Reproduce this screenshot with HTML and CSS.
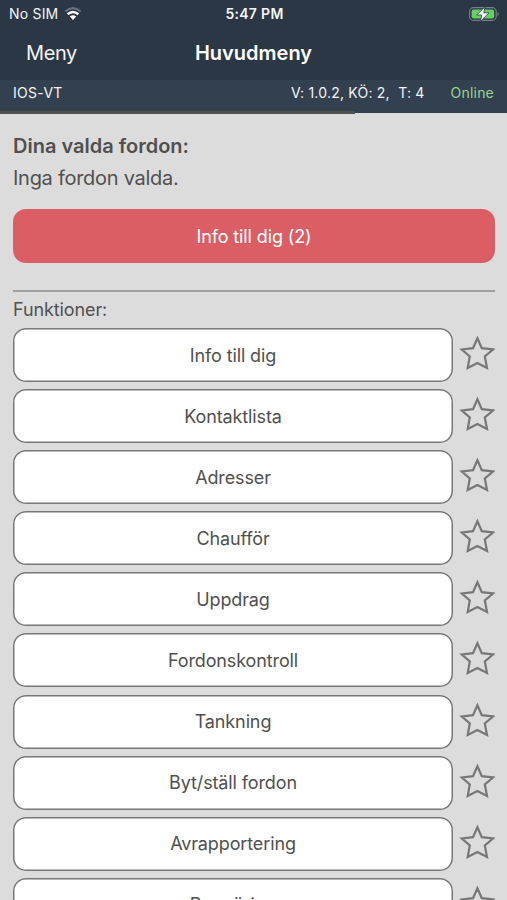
FILE: index.html
```html
<!DOCTYPE html>
<html lang="sv">
<head>
<meta charset="utf-8">
<title>Huvudmeny</title>
<link rel="stylesheet" href="styles.css">
</head>
<body>
<svg class="defs" width="0" height="0"><symbol id="star" viewBox="0 0 36 36"><path d="M18.4 3.3 22.8 13.2 34 14.5 25.8 21.5 28 33 18.4 28 8.7 33 10.8 21.5 2.8 14.5 14 13.2Z" fill="none" stroke="#777" stroke-width="2.2"/></symbol></svg>
<header class="header">
  <div class="status">
    <div class="carrier"><span>No SIM</span>
      <svg class="wifi" width="18" height="14" viewBox="0 0 18 14" fill="none"><path d="M1.3 4.5Q9-2.3 16.7 4.5" stroke="#67727e" stroke-width="2"/><path d="M3.6 7.2Q9 2.8 14.4 7.2" stroke="#fff" stroke-width="2.4"/><path d="M5.8 9.6Q9 6.9 12.2 9.6L9 13Z" fill="#fff"/></svg>
    </div>
    <div class="time">5:47 PM</div>
    <svg class="battery" width="31" height="16" viewBox="0 0 31 16"><rect x=".6" y="1.6" width="26.6" height="12.8" rx="4" fill="none" stroke="#77838b" stroke-width="1.1"/><rect x="2.6" y="3.6" width="22.6" height="8.8" rx="2.2" fill="#65d05f"/><path d="M28.5 5.8Q31 8 28.5 10.2Z" fill="#77838b"/><path d="M16 .8 7.8 9H12.7L11.4 15.4 20 6.8H14.8Z" fill="#fff" stroke="#2c3745" stroke-width=".8"/></svg>
  </div>
  <nav class="nav"><span class="back">Meny</span><h1>Huvudmeny</h1><span></span></nav>
  <div class="info"><span class="unit">IOS-VT</span><span class="version">V: 1.0.2, KÖ: 2,&nbsp; T: 4</span><span class="online">Online</span></div>
  <div class="progress"></div>
</header>
<main class="main">
  <h2>Dina valda fordon:</h2>
  <p class="none">Inga fordon valda.</p>
  <button class="alert">Info till dig (2)</button>
  <hr>
  <p class="label">Funktioner:</p>
  <div class="list">
    <div class="row"><button>Info till dig</button><svg><use href="#star"/></svg></div>
    <div class="row"><button>Kontaktlista</button><svg><use href="#star"/></svg></div>
    <div class="row"><button>Adresser</button><svg><use href="#star"/></svg></div>
    <div class="row"><button>Chaufför</button><svg><use href="#star"/></svg></div>
    <div class="row"><button>Uppdrag</button><svg><use href="#star"/></svg></div>
    <div class="row"><button>Fordonskontroll</button><svg><use href="#star"/></svg></div>
    <div class="row"><button>Tankning</button><svg><use href="#star"/></svg></div>
    <div class="row"><button>Byt/ställ fordon</button><svg><use href="#star"/></svg></div>
    <div class="row"><button>Avrapportering</button><svg><use href="#star"/></svg></div>
    <div class="row"><button>Rengöring</button><svg><use href="#star"/></svg></div>
  </div>
</main>
</body>
</html>
```
FILE: styles.css
```css
* { box-sizing: border-box; }
body { margin: 0; height: 900px; overflow: hidden; background: #dcdcdc; color: #505050; font-family: Inter, "Liberation Sans", sans-serif; }
h1, h2, p { margin: 0; }
.defs { display: block; }
.header { height: 114px; background: linear-gradient(#2c3745 80px, #33404f 80px, #33404f 113px, #dcdcdc 113px); color: #f2f4f6; }
.status { height: 28px; padding: 0 7px 0 9px; display: grid; grid-template-columns: 1fr auto 1fr; align-items: center; font-size: 14px; line-height: 28px; }
.carrier { display: flex; align-items: center; gap: 6px; letter-spacing: 0.2px; }
.time { font-weight: 600; letter-spacing: 0.3px; }
.battery { justify-self: end; }
.nav { height: 52px; padding: 0 26px; display: grid; grid-template-columns: 1fr auto 1fr; line-height: 50px; font-size: 20px; }
.back { letter-spacing: -0.4px; }
h1 { font-size: 20px; font-weight: 600; color: #fff; }
.info { height: 31px; padding: 0 13px; display: flex; font-size: 14px; line-height: 26px; white-space: nowrap; }
.unit { flex: 1; letter-spacing: 0.3px; }
.version { letter-spacing: 0.22px; }
.online { margin-left: 26px; color: #98d58f; letter-spacing: 0.2px; }
.progress { width: 355px; height: 3px; background: #505050; }
.main { padding: 17px 12px 0 13px; }
h2 { font-size: 20px; line-height: 30px; font-weight: 600; }
.none { font-size: 20px; line-height: 34px; letter-spacing: -0.28px; }
button { display: block; height: 54px; padding: 1px 0 0; border: 0; border-radius: 13px; background: #fff; box-shadow: inset 0 0 0 1.5px #777; color: #505050; font: 18px/1 Inter, "Liberation Sans", sans-serif; letter-spacing: -0.12px; }
.alert { width: 100%; margin-top: 14px; box-shadow: none; background: #db5e65; color: #fff; }
hr { height: 2px; margin: 27px 0 0; border: 0; background: #a0a0a0; }
.label { font-size: 18px; line-height: 36px; letter-spacing: -0.1px; }
.list { display: grid; gap: 7.1px; }
.row { display: grid; grid-template-columns: 440px 36px; gap: 6px; align-items: center; }
.row svg { width: 36px; height: 36px; margin-top: -4px; }
```
